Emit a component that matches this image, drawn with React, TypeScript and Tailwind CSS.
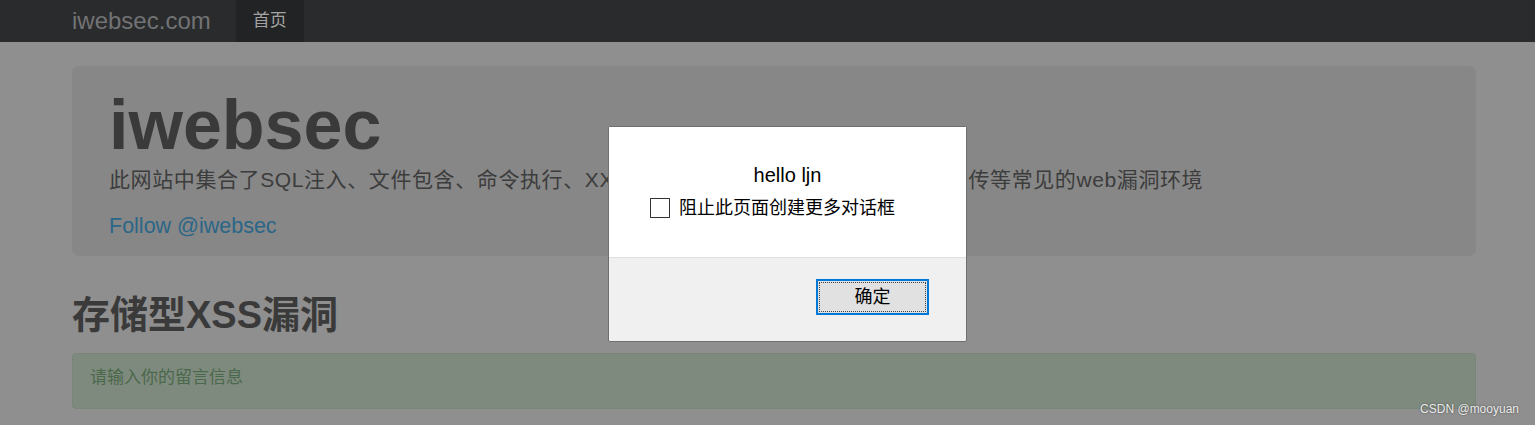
import React from "react";

const font = "font-['Liberation_Sans','Noto_Sans_CJK_SC',sans-serif]";

function Navbar() {
  return (
    <div className="h-[42px] bg-[#2a2b2c] flex items-stretch pl-[72px]">
      <div className="flex items-center text-[24px] text-[#727374] pr-[25px]">iwebsec.com</div>
      <div className="flex items-center bg-[#222324] px-[17px] text-[17px] text-[#a3a3a3]">首页</div>
    </div>
  );
}

function AlertDialog() {
  return (
    <div className="absolute left-[608px] top-[126px] w-[359px] h-[216px] border border-[#6f6f6f] bg-[#f0f0f0] rounded-[2px] flex flex-col">
      <div className="h-[131px] bg-white border-b border-[#dfdfdf] flex flex-col items-center">
        <div className="mt-[35px] text-[20px] leading-[26px] text-black">hello ljn</div>
        <label className="mt-[8px] self-start ml-[41px] flex items-center gap-[9px] text-[18px] leading-[24px] text-black">
          <span className="w-[20px] h-[20px] border-[1.5px] border-[#333] bg-white" />
          阻止此页面创建更多对话框
        </label>
      </div>
      <div className="flex justify-end pt-[21px] pr-[37px]">
        <button className="w-[113px] h-[36px] border-2 border-[#0078d7] bg-[#e1e1e1] p-[1px]">
          <span className="block w-full h-full border border-dotted border-[#444] text-[18px] leading-[28px] text-black">确定</span>
        </button>
      </div>
    </div>
  );
}

export default function App() {
  return (
    <div className={`relative w-[1535px] h-[425px] overflow-hidden bg-[#8f8f8f] ${font}`}>
      <Navbar />
      <div className="pl-[72px]">
        <div className="w-[1404px] mt-[24px] rounded-[7px] bg-[#878787] pl-[37px] pt-[24px] pb-[15px]">
          <h1 className="text-[70px] leading-[71px] font-bold text-[#3a3a3a]">iwebsec</h1>
          <p className="mt-[4px] text-[21px] leading-[30px] tracking-[0.6px] text-[#3c3c3c] whitespace-nowrap">
            此网站中集合了SQL注入、文件包含、命令执行、XXE、XSS、SSRF、反序列化、文件上传等常见的web漏洞环境
          </p>
          <p className="mt-[16px] text-[21.5px] leading-[30px] text-[#2b6688]">Follow @iwebsec</p>
        </div>
        <h2 className="mt-[37px] text-[38px] leading-[44px] font-bold text-[#3a3a3a]">存储型XSS漏洞</h2>
        <div className="w-[1404px] h-[56px] mt-[16px] rounded-[4px] bg-[#7f8a7f] border border-[#798579] px-[17px] pt-[13px] text-[17px] leading-[22px] text-[#4a684a]">
          请输入你的留言信息
        </div>
      </div>
      <AlertDialog />
      <div className="absolute right-[16px] bottom-[8px] text-[12px] leading-[16px] text-[#ececec] [text-shadow:0_0_2px_rgba(0,0,0,0.55)]">
        CSDN @mooyuan
      </div>
    </div>
  );
}
